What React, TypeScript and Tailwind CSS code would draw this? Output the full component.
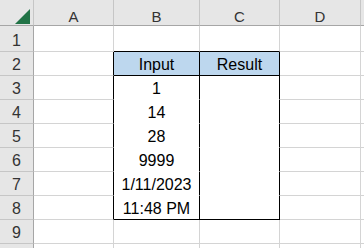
import React from "react";

const columns = ["A", "B", "C", "D", "E"];

const values: Record<number, [string, string]> = {
    2: ["Input", "Result"],
    3: ["1", ""],
    4: ["14", ""],
    5: ["28", ""],
    6: ["9999", ""],
    7: ["1/11/2023", ""],
    8: ["11:48 PM", ""],
};

const rows = [1, 2, 3, 4, 5, 6, 7, 8, 9, 10];

function inTable(row: number) {
    return row >= 2 && row <= 8;
}

function cellClass(row: number, col: number) {
    const tableCol = col === 1 || col === 2;
    let right = "border-r-[#d4d4d4]";
    if ((col === 0 || tableCol) && inTable(row)) right = "border-r-black";

    let bottom = "border-b-[#d4d4d4]";
    if (tableCol && (row === 1 || row === 2 || row === 8)) bottom = "border-b-black";
    else if (tableCol && row >= 3 && row <= 7) bottom = "border-b-white";

    const bg = row === 2 && tableCol ? "bg-[#bdd7ee]" : "bg-white";
    return `flex items-end justify-center overflow-hidden whitespace-nowrap border-r border-b pb-[2px] text-[16px] leading-[16px] text-black ${right} ${bottom} ${bg}`;
}

function Corner() {
    return (
        <div className="border-r border-b border-r-[#c6c6c6] border-b-[#a6a6a6] bg-[#e6e6e6]">
            <svg width="33" height="25" viewBox="0 0 33 25">
                <polygon points="30,9 30,24 15,24" fill="#217346" />
            </svg>
        </div>
    );
}

export default function App() {
    return (
        <div className="w-[364px] h-[248px] overflow-hidden bg-white font-['Liberation_Sans',Arial,sans-serif]">
            <div className="grid grid-cols-[34px_80px_86px_80px_81px_40px] grid-rows-[26px_26px_repeat(8,24px)_24px]">
                <Corner />
                {columns.map((c) => (
                    <div
                        key={c}
                        className="flex items-end justify-center border-r border-b border-r-[#c6c6c6] border-b-[#a6a6a6] bg-[#e6e6e6] pb-[1px] text-[15px] leading-[15px] text-[#333]"
                    >
                        {/* column E is off the right edge, only its first pixels show */}
                        {c === "E" ? "" : c}
                    </div>
                ))}
                {rows.map((r) => (
                    <React.Fragment key={r}>
                        <div className="flex items-end justify-center border-r border-b border-r-[#a6a6a6] border-b-[#c6c6c6] bg-[#e6e6e6] pb-[2px] text-[16px] leading-[16px] text-[#333]">
                            {r < 10 ? r : ""}
                        </div>
                        {columns.map((c, i) => (
                            <div key={c} className={cellClass(r, i)}>
                                {i === 1 || i === 2 ? values[r]?.[i - 1] ?? "" : ""}
                            </div>
                        ))}
                    </React.Fragment>
                ))}
            </div>
        </div>
    );
}
